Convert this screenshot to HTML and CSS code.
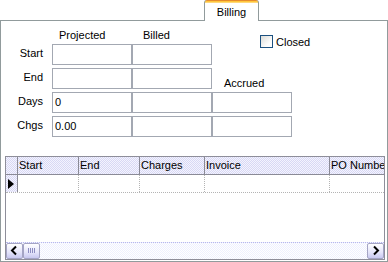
FILE: index.html
```html
<!DOCTYPE html>
<html>
<head>
<meta charset="utf-8">
<link rel="stylesheet" href="styles.css">
</head>
<body>
<div class="tabs">
  <div class="tab-fill left"></div>
  <div class="tab">Billing</div>
  <div class="tab-fill right"></div>
</div>
<div class="panel">
  <div class="form">
    <div class="colhead c2">Projected</div>
    <div class="colhead c3">Billed</div>
    <label class="check"><span class="box"></span><span>Closed</span></label>

    <div class="lbl r2">Start</div><div class="field r2"></div><div class="field r2"></div>
    <div class="lbl r3">End</div><div class="field r3"></div><div class="field r3"></div><div class="accrued r3">Accrued</div>
    <div class="lbl r4">Days</div><div class="field r4">0</div><div class="field r4"></div><div class="field r4"></div>
    <div class="lbl r5">Chgs</div><div class="field r5">0.00</div><div class="field r5"></div><div class="field r5"></div>
  </div>

  <div class="dgrid">
    <div class="ghead">
      <div class="hc rh"></div>
      <div class="hc w61">Start</div>
      <div class="hc w61">End</div>
      <div class="hc w65">Charges</div>
      <div class="hc w125">Invoice</div>
      <div class="hc last">PO Number</div>
    </div>
    <div class="grow">
      <div class="rc rh"><svg width="8" height="12" viewBox="0 0 8 12"><path d="M1 1 L7 6 L1 11 Z" fill="#000"/></svg></div>
      <div class="rc w61"></div>
      <div class="rc w61"></div>
      <div class="rc w65"></div>
      <div class="rc w125"></div>
      <div class="rc last"></div>
    </div>
    <div class="gbody"></div>
    <div class="hscroll">
      <div class="sbtn"><svg width="15" height="14" viewBox="0 0 15 14"><path d="M9 2.5 L5 6.5 L9 10.5" fill="none" stroke="#000" stroke-width="2"/></svg></div>
      <div class="thumb"><svg width="15" height="14" viewBox="0 0 15 14"><path d="M4.5 4 V9 M6.5 4 V9 M8.5 4 V9 M10.5 4 V9" stroke="#8c8cc0" stroke-width="1"/></svg></div>
      <div class="track"></div>
      <div class="sbtn"><svg width="15" height="14" viewBox="0 0 15 14"><path d="M6 2.5 L10 6.5 L6 10.5" fill="none" stroke="#000" stroke-width="2"/></svg></div>
    </div>
  </div>
</div>
</body>
</html>
```

FILE: styles.css
```css
* { box-sizing: border-box; }
html, body { margin: 0; padding: 0; background: #fff; }
body {
  width: 388px;
  height: 262px;
  overflow: hidden;
  font: 11px/12px "Liberation Sans", Arial, sans-serif;
  color: #000;
}

/* tab strip */
.tabs { display: flex; height: 21px; }
.tab-fill { border-bottom: 1px solid #919b9c; }
.tab-fill.left { width: 204px; }
.tab-fill.right { flex: 1; }
.tab {
  width: 55px;
  border-left: 1px solid #919b9c;
  border-right: 1px solid #919b9c;
  border-radius: 3px 3px 0 0;
  background: linear-gradient(#e68b2c 0 1px, #ffc73c 1px 2px, #ffd87a 2px 3px, #fff 3px);
  text-align: center;
  padding-top: 6px;
}

/* panel */
.panel {
  height: 241px;
  border: 1px solid #919b9c;
  border-top: none;
  padding: 0 2px 0 4px;
  display: flex;
  flex-direction: column;
}

.form {
  display: grid;
  grid-template-columns: 47px 80px 80px 80px 1fr;
  grid-template-rows: 12px repeat(4, 21px);
  row-gap: 3px;
  padding-top: 8px;
}
.colhead { grid-row: 1; }
.colhead.c2 { grid-column: 2; padding-left: 7px; }
.colhead.c3 { grid-column: 3; padding-left: 11px; }
.r2 { grid-row: 2; }
.r3 { grid-row: 3; }
.r4 { grid-row: 4; }
.r5 { grid-row: 5; }

.check {
  grid-column: 4 / 6;
  grid-row: 1 / 3;
  align-self: start;
  margin: 6px 0 0 48px;
  display: flex;
  align-items: center;
}
.check .box {
  width: 13px;
  height: 13px;
  border: 1px solid #1c5180;
  background: linear-gradient(135deg, #dcdcd7, #fdfdfd 70%);
  margin-right: 3px;
}

.lbl { grid-column: 1; text-align: right; padding: 3px 9px 0 0; }
.field {
  border: 1px solid #a3a8b2;
  padding: 3px 0 0 2px;
  background: #fff;
}
.accrued { grid-column: 4; align-self: end; padding-left: 12px; }

/* data grid */
.dgrid {
  margin-top: 19px;
  height: 104px;
  border: 1px solid #8e8e9a;
  display: flex;
  flex-direction: column;
  overflow: hidden;
}
.ghead, .grow { display: flex; height: 18px; flex: none; }
.ghead { border-bottom: 1px solid #8a8a96; }
.hc {
  height: 17px;
  line-height: 17px;
  padding-left: 1px;
  border-right: 1px solid #8a8a96;
  background: repeating-conic-gradient(#d8d8f4 0 25%, #f4f4fe 0 50%) 0 0 / 2px 2px;
  white-space: nowrap;
  overflow: hidden;
}
.rh { width: 12px; flex: none; }
.w61 { width: 61px; flex: none; }
.w65 { width: 65px; flex: none; }
.w125 { width: 125px; flex: none; }
.last { flex: 1; border-right: none; }

.grow { border-bottom: 1px dotted #b4b4b4; }
.rc { height: 17px; border-right: 1px dotted #b4b4b4; background: #fff; }
.rc.rh {
  border-right: 1px solid #8a8a96;
  background: repeating-conic-gradient(#d8d8f4 0 25%, #f4f4fe 0 50%) 0 0 / 2px 2px;
  display: flex;
  align-items: center;
  padding-left: 1px;
}
.rc.rh svg { display: block; }
.rc.last { border-right: none; }

.gbody { flex: 1; background: #fff; }

.hscroll {
  height: 17px;
  flex: none;
  display: flex;
  border-top: 1px dotted #b8b8ec;
  background: repeating-conic-gradient(#eef0ff 0 25%, #fff 0 50%) 0 0 / 2px 2px;
}
.sbtn, .thumb {
  width: 17px;
  height: 16px;
  border: 1px solid #a4a4c4;
  border-radius: 2px;
  background: linear-gradient(#ffffff, #e4e4fa 60%, #c8c8f0);
  display: flex;
  align-items: center;
  justify-content: center;
}
.sbtn svg, .thumb svg { display: block; }
.track { flex: 1; }
```
